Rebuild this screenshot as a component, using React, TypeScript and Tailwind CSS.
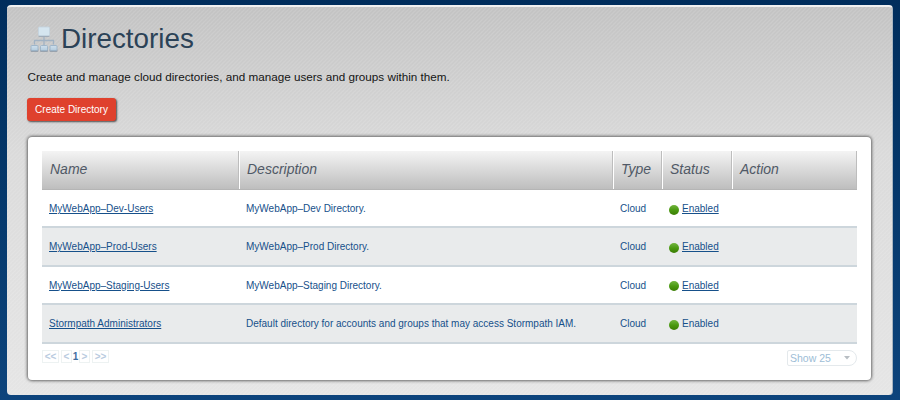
type Directory = { name: string; description: string; linked: boolean };

const directories: Directory[] = [
  { name: "MyWebApp–Dev-Users", description: "MyWebApp–Dev Directory.", linked: true },
  { name: "MyWebApp–Prod-Users", description: "MyWebApp–Prod Directory.", linked: true },
  { name: "MyWebApp–Staging-Users", description: "MyWebApp–Staging Directory.", linked: true },
  {
    name: "Stormpath Administrators",
    description: "Default directory for accounts and groups that may access Stormpath IAM.",
    linked: false,
  },
];

const columns = "grid grid-cols-[198px_374px_49px_70px_124px]";

function DirectoryIcon() {
  return (
    <svg width="28" height="27" viewBox="0 0 28 27" className="mt-[3px] mr-[3px] shrink-0">
      <defs>
        <linearGradient id="node" x1="0" y1="0" x2="0" y2="1">
          <stop offset="0" stopColor="#cfe0ed" />
          <stop offset="1" stopColor="#b4cbdd" />
        </linearGradient>
      </defs>
      <g fill="#8794a3" opacity="0.75">
        <rect x="8.500" y="9" width="11" height="2" rx="1" />
        <rect x="0.500" y="23" width="8" height="3" rx="1" />
        <rect x="10" y="23" width="8" height="3" rx="1" />
        <rect x="19.500" y="23" width="8" height="3" rx="1" />
      </g>
      <path d="M14 11v8M4.500 18.500v-4h19v4" fill="none" stroke="#a0b2c4" strokeWidth="1.300" />
      <rect x="8.500" y="1" width="11" height="8.800" rx="1" fill="#d5e5ef" stroke="#c3d3e0" strokeWidth="0.800" />
      <rect x="1" y="19.500" width="7" height="5" rx="1" fill="url(#node)" stroke="#9ab2c7" strokeWidth="0.900" />
      <rect x="10.500" y="19.500" width="7" height="5" rx="1" fill="url(#node)" stroke="#9ab2c7" strokeWidth="0.900" />
      <rect x="20" y="19.500" width="7" height="5" rx="1" fill="url(#node)" stroke="#9ab2c7" strokeWidth="0.900" />
    </svg>
  );
}

function TableHeader() {
  const divider = "border-r border-white shadow-[inset_-1px_0_0_#bdbdbd]";
  return (
    <div className={`${columns} h-[39px] border-b border-[#b5b5b5] bg-gradient-to-b from-[#f4f4f4] to-[#bebebe] text-[14px] leading-[37px] text-[#505966] italic`}>
      <div className={`pl-2 ${divider}`}>Name</div>
      <div className={`pl-[7px] ${divider}`}>Description</div>
      <div className={`pl-[7px] ${divider}`}>Type</div>
      <div className={`pl-[7px] ${divider}`}>Status</div>
      <div className="pl-[7px] shadow-[inset_-1px_0_0_#bdbdbd]">Action</div>
    </div>
  );
}

function TableRow({ directory, striped }: { directory: Directory; striped: boolean }) {
  return (
    <div
      className={`${columns} h-[38.400px] border-b-2 border-[#cdd6dc] text-[10px] leading-[38px] text-[#16508a] ${striped ? "bg-[#e9ebec]" : "bg-white"}`}
    >
      <div className="pl-[7px]">
        <a className="underline">{directory.name}</a>
      </div>
      <div className="pl-[6px]">{directory.description}</div>
      <div className="pl-[6px]">Cloud</div>
      <div className="flex items-center pl-[6px]">
        <span className="mt-px mr-[3px] size-[10px] rounded-full bg-gradient-to-b from-[#72b53c] via-[#4b9a10] to-[#3b7d05]" />
        <span className={directory.linked ? "underline" : ""}>Enabled</span>
      </div>
      <div />
    </div>
  );
}

function Pager() {
  const button = "flex h-[13px] items-center justify-center border border-[#edf2f2]";
  return (
    <div className="-mt-px flex items-center text-[10px] font-bold text-[#b9cbe0]">
      <span className={`${button} w-[17px]`}>&lt;&lt;</span>
      <span className={`${button} ml-[2px] w-[11px]`}>&lt;</span>
      <span className="w-[7px] text-center text-[#3f6e9f]">1</span>
      <span className={`${button} w-[11px]`}>&gt;</span>
      <span className={`${button} ml-[2px] w-[17px]`}>&gt;&gt;</span>
    </div>
  );
}

export default function App() {
  return (
    <div className="h-[401px] w-[900px] border-b border-white bg-gradient-to-b from-[#002d5c] to-[#0d447c] px-[7px] pt-[5px] font-['Liberation_Sans',Arial,sans-serif]">
      <main className="h-[390px] rounded-[4px] border-t-2 border-r border-t-[#f0f0f0] border-r-[#a8b4bf] bg-[repeating-linear-gradient(135deg,rgba(255,255,255,0.12)_0px,rgba(255,255,255,0)_1.414px,rgba(255,255,255,0.12)_2.828px),linear-gradient(to_bottom,#c2c2c2_0%,#dadada_38%,#e5e5e5_100%)] pr-[20px] pl-[21px]">
        <header className="flex h-[61px] items-center pl-[2px]">
          <DirectoryIcon />
          <h1 className="mt-[3px] text-[27.800px] leading-[32px] text-[#2b4257]">Directories</h1>
        </header>
        <p className="-ml-[0.500px] h-[30px] text-[11.700px] leading-[18px] text-[#151515]">
          Create and manage cloud directories, and manage users and groups within them.
        </p>
        <button className="-ml-px block h-[23px] w-[89px] rounded-[3px] bg-[#df412d] text-[10px] text-white shadow-[1px_1px_2px_rgba(0,0,0,0.65)]">
          Create Directory
        </button>
        <section className="mt-4 h-[243px] w-[843px] rounded-[4px] bg-white pt-[14px] pr-[14px] pl-[14px] shadow-[0_0_3px_1px_#666]">
          <TableHeader />
          {directories.map((directory, index) => (
            <TableRow key={directory.name} directory={directory} striped={index % 2 === 1} />
          ))}
          <div className="flex items-start justify-between pt-[6px]">
            <Pager />
            <div className="flex h-[16px] w-[70px] items-center justify-between rounded-l-[2px] rounded-r-[8px] border border-[#e4e9ec] pt-[2px] pr-[6px] pl-[2px] text-[10.500px] text-[#9dbdd6]">
              <span>Show 25</span>
              <svg width="6" height="4" viewBox="0 0 6 4" className="-mt-[2px]">
                <path d="M0 0h6L3 3.500Z" fill="#b8bec3" />
              </svg>
            </div>
          </div>
        </section>
      </main>
    </div>
  );
}
